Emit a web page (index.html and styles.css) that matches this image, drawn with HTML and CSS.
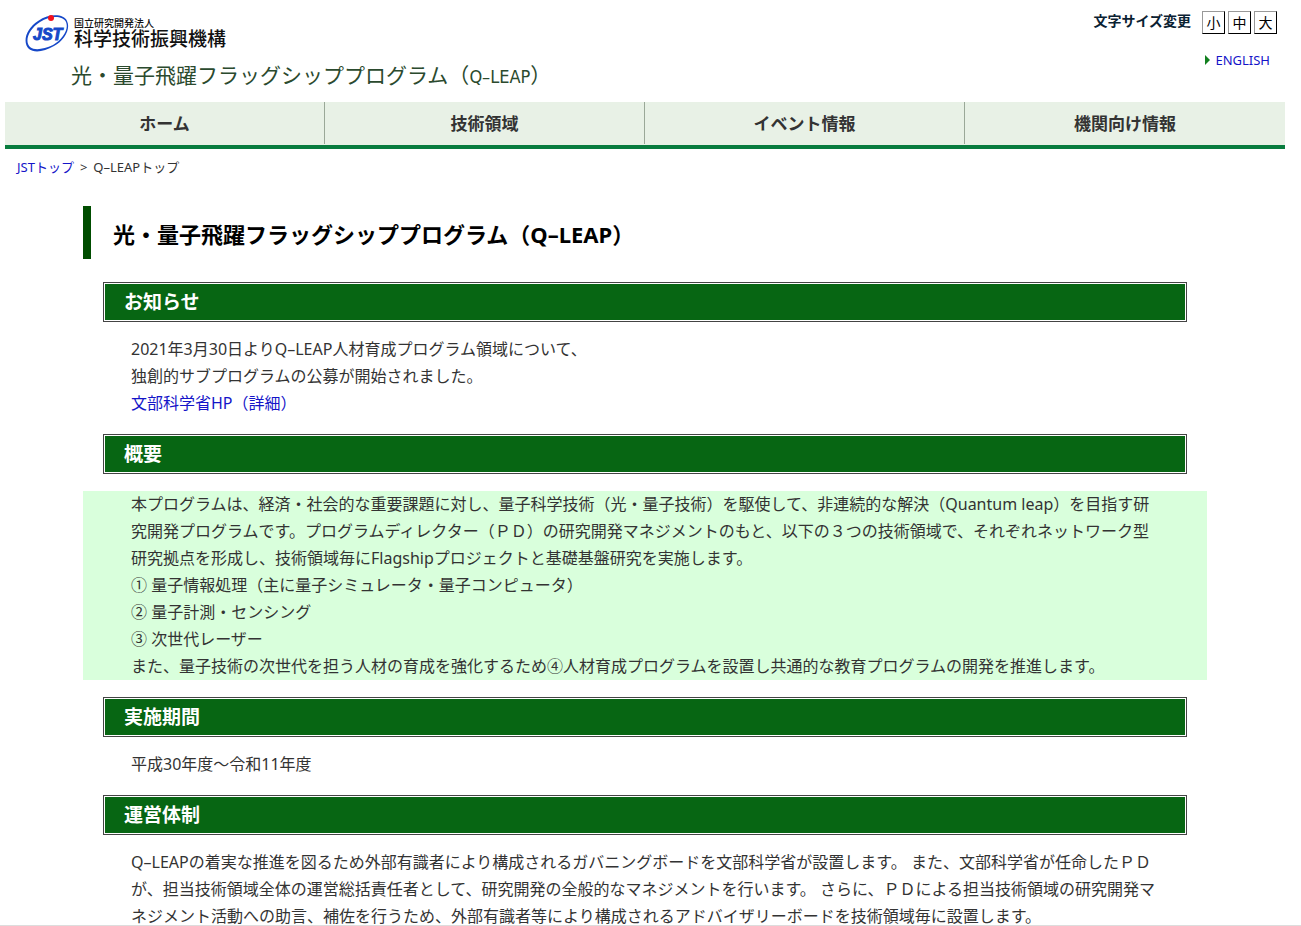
FILE: index.html
```html
<!DOCTYPE html>
<html lang="ja">
<head>
  <meta charset="UTF-8">
  <meta name="viewport" content="width=device-width, initial-scale=1.0">
  <title>光・量子飛躍フラッグシッププログラム（Q–LEAP）</title>
  <link rel="stylesheet" href="styles.css">
</head>
<body>
  <div class="container">
    <header class="header">
      <div class="brand">
        <a class="logo" href="#">
          <svg class="logo-mark" width="44" height="40" viewBox="0 0 44 40" aria-hidden="true">
            <path fill="#1648c8" fill-rule="evenodd" d="M4 36C-3 29 1 16 13 8C25 0 39 1 42 8C46 16 39 28 29 33C19 39 9 40 4 36ZM5 34C10 38 19 36 28 32C38 26 44 16 41 9C38 3 26 2 15 9C4 16-1 28 5 34Z"/>
            <circle cx="26" cy="5" r="3" fill="#f5101c"/>
            <text class="logo-text" x="8" y="27">JST</text>
          </svg>
          <span class="logo-name">
            <span class="logo-small">国立研究開発法人</span>
            <span class="logo-large">科学技術振興機構</span>
          </span>
        </a>
        <p class="site-title">光・量子飛躍フラッグシッププログラム（<span class="site-title-en">Q–LEAP</span>）</p>
      </div>
      <div class="tools">
        <div class="font-size">
          <span class="font-size-label">文字サイズ変更</span>
          <button class="size-btn" type="button">小</button>
          <button class="size-btn" type="button">中</button>
          <button class="size-btn" type="button">大</button>
        </div>
        <a class="english" href="#">ENGLISH</a>
      </div>
    </header>

    <nav class="nav">
      <a href="#">ホーム</a>
      <a href="#">技術領域</a>
      <a href="#">イベント情報</a>
      <a href="#">機関向け情報</a>
    </nav>

    <div class="breadcrumb">
      <a href="#">JSTトップ</a>
      <span>&gt;</span>
      <span>Q–LEAPトップ</span>
    </div>

    <main class="main">
      <h1>光・量子飛躍フラッグシッププログラム（Q–LEAP）</h1>

      <h2>お知らせ</h2>
      <p>2021年3月30日よりQ–LEAP人材育成プログラム領域について、<br>
      独創的サブプログラムの公募が開始されました。<br>
      <a href="#">文部科学省HP（詳細）</a></p>

      <h2>概要</h2>
      <div class="summary">本プログラムは、経済・社会的な重要課題に対し、量子科学技術（光・量子技術）を駆使して、非連続的な解決（Quantum leap）を目指す研究開発プログラムです。プログラムディレクター（ＰＤ）の研究開発マネジメントのもと、以下の３つの技術領域で、それぞれネットワーク型研究拠点を形成し、技術領域毎にFlagshipプロジェクトと基礎基盤研究を実施します。<br>
      ① 量子情報処理（主に量子シミュレータ・量子コンピュータ）<br>
      ② 量子計測・センシング<br>
      ③ 次世代レーザー<br>
      また、量子技術の次世代を担う人材の育成を強化するため④人材育成プログラムを設置し共通的な教育プログラムの開発を推進します。</div>

      <h2>実施期間</h2>
      <p>平成30年度～令和11年度</p>

      <h2>運営体制</h2>
      <p>Q–LEAPの着実な推進を図るため外部有識者により構成されるガバニングボードを文部科学省が設置します。 また、文部科学省が任命したＰＤが、担当技術領域全体の運営総括責任者として、研究開発の全般的なマネジメントを行います。 さらに、ＰＤによる担当技術領域の研究開発マネジメント活動への助言、補佐を行うため、外部有識者等により構成されるアドバイザリーボードを技術領域毎に設置します。</p>
    </main>
  </div>
  <div class="bottom-line"></div>
</body>
</html>
```

FILE: styles.css
```css
* {
  box-sizing: border-box;
}

body {
  margin: 0;
  background-color: #fff;
  color: #333;
  font-family: "Noto Sans", "Noto Sans CJK JP", sans-serif;
  font-size: 16px;
  line-height: 27px;
}

a {
  color: #1414c8;
  text-decoration: none;
}

.container {
  margin: 0 16px 0 5px;
}

/* header */
.header {
  display: flex;
  justify-content: space-between;
  height: 102px;
  padding: 11px 8px 0 20px;
}

.logo {
  display: flex;
  gap: 5px;
  color: #111;
}

.logo-mark {
  display: block;
  margin-top: 2px;
}

.logo-text {
  fill: #1648c8;
  stroke: #1648c8;
  font-family: "Liberation Sans", sans-serif;
  font-size: 16px;
  font-style: italic;
  font-weight: bold;
}

.logo-name {
  display: flex;
  flex-direction: column;
  padding-top: 6px;
  font-family: "Noto Sans CJK JP", sans-serif;
  font-weight: 500;
}

.logo-small {
  font-size: 10px;
  line-height: 12px;
}

.logo-large {
  font-size: 19px;
  line-height: 18px;
}

.site-title {
  margin: 9px 0 0 46px;
  color: #2b4a2e;
  font-family: "Noto Sans CJK JP", sans-serif;
  font-size: 21px;
  line-height: 24px;
}

.site-title-en {
  font-family: "Liberation Sans Narrow", "DejaVu Sans Condensed", "Noto Sans CJK JP", sans-serif;
  font-size: 18px;
}

.font-size {
  display: flex;
  gap: 3px;
}

.font-size-label {
  margin-right: 8px;
  color: #0b2233;
  font-size: 14px;
  font-weight: bold;
  line-height: 20px;
}

.size-btn {
  width: 23px;
  height: 23px;
  padding: 0;
  background-color: #fff;
  border: 1px solid #000;
  border-top-color: #999;
  border-left-color: #999;
  color: #000;
  font-family: inherit;
  font-size: 14px;
  line-height: 20px;
  cursor: pointer;
}

.tools {
  display: flex;
  flex-direction: column;
  align-items: flex-end;
  gap: 16px;
}

.english {
  display: flex;
  align-items: center;
  gap: 5px;
  margin-right: 7px;
  font-size: 13px;
  line-height: 20px;
}

.english::before {
  content: "";
  border-left: 5px solid #128020;
  border-top: 5px solid transparent;
  border-bottom: 5px solid transparent;
}

/* navigation */
.nav {
  display: grid;
  grid-template-columns: repeat(4, 1fr);
  padding-bottom: 1px;
  background-color: #e8f1e6;
  border-bottom: 4px solid #087c3e;
}

.nav a {
  padding-top: 2px;
  border-right: 1px solid #9aa898;
  color: #333;
  font-size: 17px;
  font-weight: bold;
  line-height: 40px;
  text-align: center;
}

.nav a:last-child {
  border-right: none;
}

.breadcrumb {
  display: flex;
  gap: 6px;
  padding: 8px 12px;
  font-size: 13px;
  line-height: 20px;
}

/* contents */
.main {
  margin: 21px 78px 0;
}

h1 {
  margin: 0 0 23px;
  padding: 4px 0 0 22px;
  border-left: 8px solid #004d00;
  color: #000;
  font-size: 22px;
  line-height: 49px;
}

h2 {
  margin: 17px 20px;
  padding: 0 20px;
  background-color: #076613;
  border: 1px solid #444;
  box-shadow: inset 0 0 0 1px #fff;
  color: #fff;
  font-size: 19px;
  line-height: 38px;
}

.main p {
  margin: -3px 0 17px;
  padding: 0 48px;
}

.summary {
  padding: 0 48px;
  background-color: #d9ffdc;
}

.bottom-line {
  position: fixed;
  right: 0;
  bottom: 0;
  left: 0;
  height: 1px;
  background-color: #ddd;
}
```
